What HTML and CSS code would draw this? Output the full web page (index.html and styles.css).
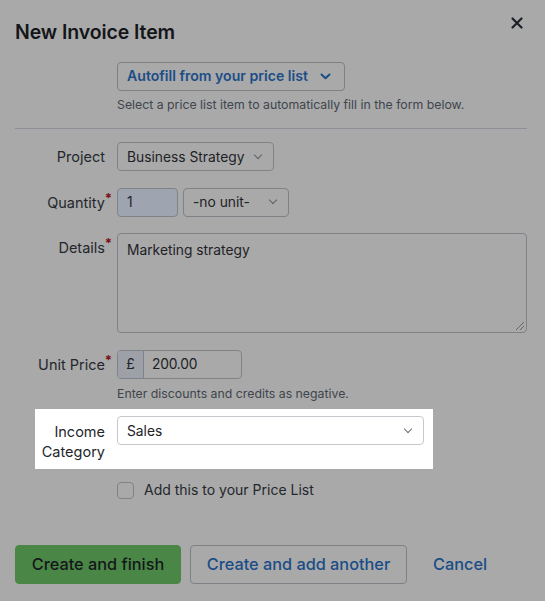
FILE: index.html
```html
<!DOCTYPE html>
<html lang="en">
<head>
<meta charset="utf-8">
<title>New Invoice Item</title>
<link rel="stylesheet" href="styles.css">
</head>
<body>
<div class="modal">
  <header class="modal-head">
    <h1 class="modal-title">New Invoice Item</h1>
    <button class="close" aria-label="Close">
      <svg width="12" height="12" viewBox="0 0 12 12"><path d="M1.5 1.5 L10.5 10.5 M10.5 1.5 L1.5 10.5" stroke="#1c2026" stroke-width="2.2" stroke-linecap="round"/></svg>
    </button>
  </header>

  <div class="autofill">
    <button class="autofill-btn">Autofill from your price list
      <svg class="chev-blue" width="11" height="7" viewBox="0 0 11 7"><path d="M1.5 1.5 L5.5 5.2 L9.5 1.5" fill="none" stroke="#1b4d87" stroke-width="2" stroke-linecap="round" stroke-linejoin="round"/></svg>
    </button>
    <p class="help">Select a price list item to automatically fill in the form below.</p>
  </div>

  <hr class="divider">

  <div class="form">
    <div class="row">
      <label class="label">Project</label>
      <div class="control">
        <div class="select select-project"><span>Business Strategy</span><i class="chev"></i></div>
      </div>
    </div>

    <div class="row">
      <label class="label req">Quantity</label>
      <div class="control inline">
        <div class="input input-qty">1</div>
        <div class="select select-unit"><span>-no unit-</span><i class="chev"></i></div>
      </div>
    </div>

    <div class="row">
      <label class="label req">Details</label>
      <div class="control">
        <div class="textarea">Marketing strategy<span class="grip"></span></div>
      </div>
    </div>

    <div class="row">
      <label class="label req">Unit Price</label>
      <div class="control">
        <div class="input-group"><span class="addon">£</span><span class="input-val">200.00</span></div>
        <p class="help help-price">Enter discounts and credits as negative.</p>
      </div>
    </div>

    <div class="row row-highlight">
      <label class="label">Income Category</label>
      <div class="control">
        <div class="select select-income"><span>Sales</span><i class="chev chev-light"></i></div>
      </div>
    </div>

    <div class="row row-check">
      <span></span>
      <label class="check"><span class="box"></span>Add this to your Price List</label>
    </div>
  </div>

  <footer class="actions">
    <button class="btn btn-primary">Create and finish</button>
    <button class="btn btn-secondary">Create and add another</button>
    <button class="btn btn-link">Cancel</button>
  </footer>
</div>
</body>
</html>
```

FILE: styles.css
```css
* { box-sizing: border-box; }
html, body { margin: 0; padding: 0; }
body {
  background: #a9a9a9;
  font-family: Inter, "Noto Sans", "Liberation Sans", sans-serif;
  color: #1e2226;
  width: 545px;
  height: 601px;
  overflow: hidden;
}
.modal { padding: 0 18px 0 15px; }

.modal-head {
  display: flex;
  justify-content: space-between;
  align-items: flex-start;
  height: 62px;
}
.modal-title {
  margin: 20px 0 0;
  font-size: 19.5px;
  font-weight: 600;
  letter-spacing: -0.1px;
  line-height: 24px;
  color: #141619;
}
.close {
  margin: 17px 4px 0 0;
  border: 0;
  background: none;
  padding: 0;
  width: 12px;
  height: 12px;
  display: flex;
}

.autofill { padding-left: 102px; }
.autofill-btn {
  display: inline-flex;
  align-items: center;
  gap: 12px;
  height: 29px;
  padding: 0 13px 0 9px;
  border: 1px solid #7d8186;
  border-radius: 4px;
  background: transparent;
  font: 600 14.1px/1 Inter, "Noto Sans", sans-serif;
  color: #1b4d87;
  white-space: nowrap;
}
.help {
  margin: 6px 0 0;
  font-size: 12.3px;
  line-height: 16px;
  color: #3e454d;
}

.divider {
  border: 0;
  border-top: 1px solid #8c9096;
  margin: 15px 0 13px;
}

.form { display: flex; flex-direction: column; }
.row {
  display: grid;
  grid-template-columns: 90px 1fr;
  column-gap: 12px;
  margin-bottom: 16.5px;
}
.label {
  text-align: right;
  font-size: 14.5px;
  line-height: 20px;
  padding-top: 5px;
  color: #23272c;
  position: relative;
}
.label.req::after {
  content: "*";
  position: absolute;
  right: -7px;
  top: 0;
  color: #7a1012;
  font-size: 13px;
  font-weight: 700;
}
.control { min-width: 0; }
.inline { display: flex; gap: 5px; }

.select, .input, .textarea, .input-group {
  border: 1px solid #7f8388;
  border-radius: 4px;
  font-size: 13.8px;
  color: #1e2226;
}
.select {
  height: 29px;
  display: inline-flex;
  align-items: center;
  justify-content: space-between;
  padding: 0 9px 0 9px;
  white-space: nowrap;
}
.select-project { width: 157px; }
.select-unit { width: 106px; }
.chev {
  width: 6px; height: 6px;
  border-right: 1.7px solid #5c6168;
  border-bottom: 1.7px solid #5c6168;
  transform: rotate(45deg);
  margin-top: -4px;
  margin-right: 3px;
  flex: none;
}
.input {
  height: 29px;
  display: flex;
  align-items: center;
  padding: 0 9px;
}
.input-qty { width: 61px; background: #9ea5b1; }
.textarea {
  height: 100px;
  padding: 6px 9px;
  position: relative;
  line-height: 20px;
}
.grip {
  position: absolute;
  right: 2px; bottom: 2px;
  width: 8px; height: 8px;
  background: linear-gradient(135deg, transparent 45%, #666 45%, #666 52%, transparent 52%, transparent 70%, #666 70%, #666 77%, transparent 77%);
}
.input-group {
  display: inline-flex;
  width: 125px;
  height: 29px;
  overflow: hidden;
}
.addon {
  width: 26px;
  background: #9da1a7;
  border-right: 1px solid #7f8388;
  display: flex;
  align-items: center;
  justify-content: center;
}
.input-val {
  display: flex;
  align-items: center;
  padding-left: 8px;
  letter-spacing: -0.2px;
}
.help-price { margin-top: 7px; }

.row-highlight {
  background: #fff;
  margin: -9px 94px 11px 20px;
  padding: 7px 9px 7px 0;
  grid-template-columns: 70px 1fr;
}
.row-highlight .label { padding-top: 6px; }
.select-income {
  width: 100%;
  border-color: #c5c9ce;
  background: #fff;
}
.chev-light { border-color: #6c7279; }

.row-check { margin-bottom: 0; }
.check {
  display: flex;
  align-items: center;
  gap: 10px;
  font-size: 14px;
  line-height: 20px;
  color: #23272c;
}
.box {
  width: 17px; height: 17px;
  border: 1px solid #7f8388;
  border-radius: 4px;
}

.actions {
  display: flex;
  align-items: center;
  margin-top: 45px;
  gap: 9px;
}
.btn {
  height: 39px;
  border-radius: 4px;
  font: 500 16.3px/1 Inter, "Noto Sans", sans-serif;
  padding: 0;
  white-space: nowrap;
}
.btn-primary {
  background: #4a8746;
  border: 1px solid #4a8746;
  color: #15181b;
  width: 166px;
}
.btn-secondary {
  background: transparent;
  border: 1px solid #7d8186;
  color: #1b4d87;
  width: 217px;
}
.btn-link {
  background: none;
  border: 0;
  color: #1b4d87;
  padding: 0 0 0 17px;
}
```
